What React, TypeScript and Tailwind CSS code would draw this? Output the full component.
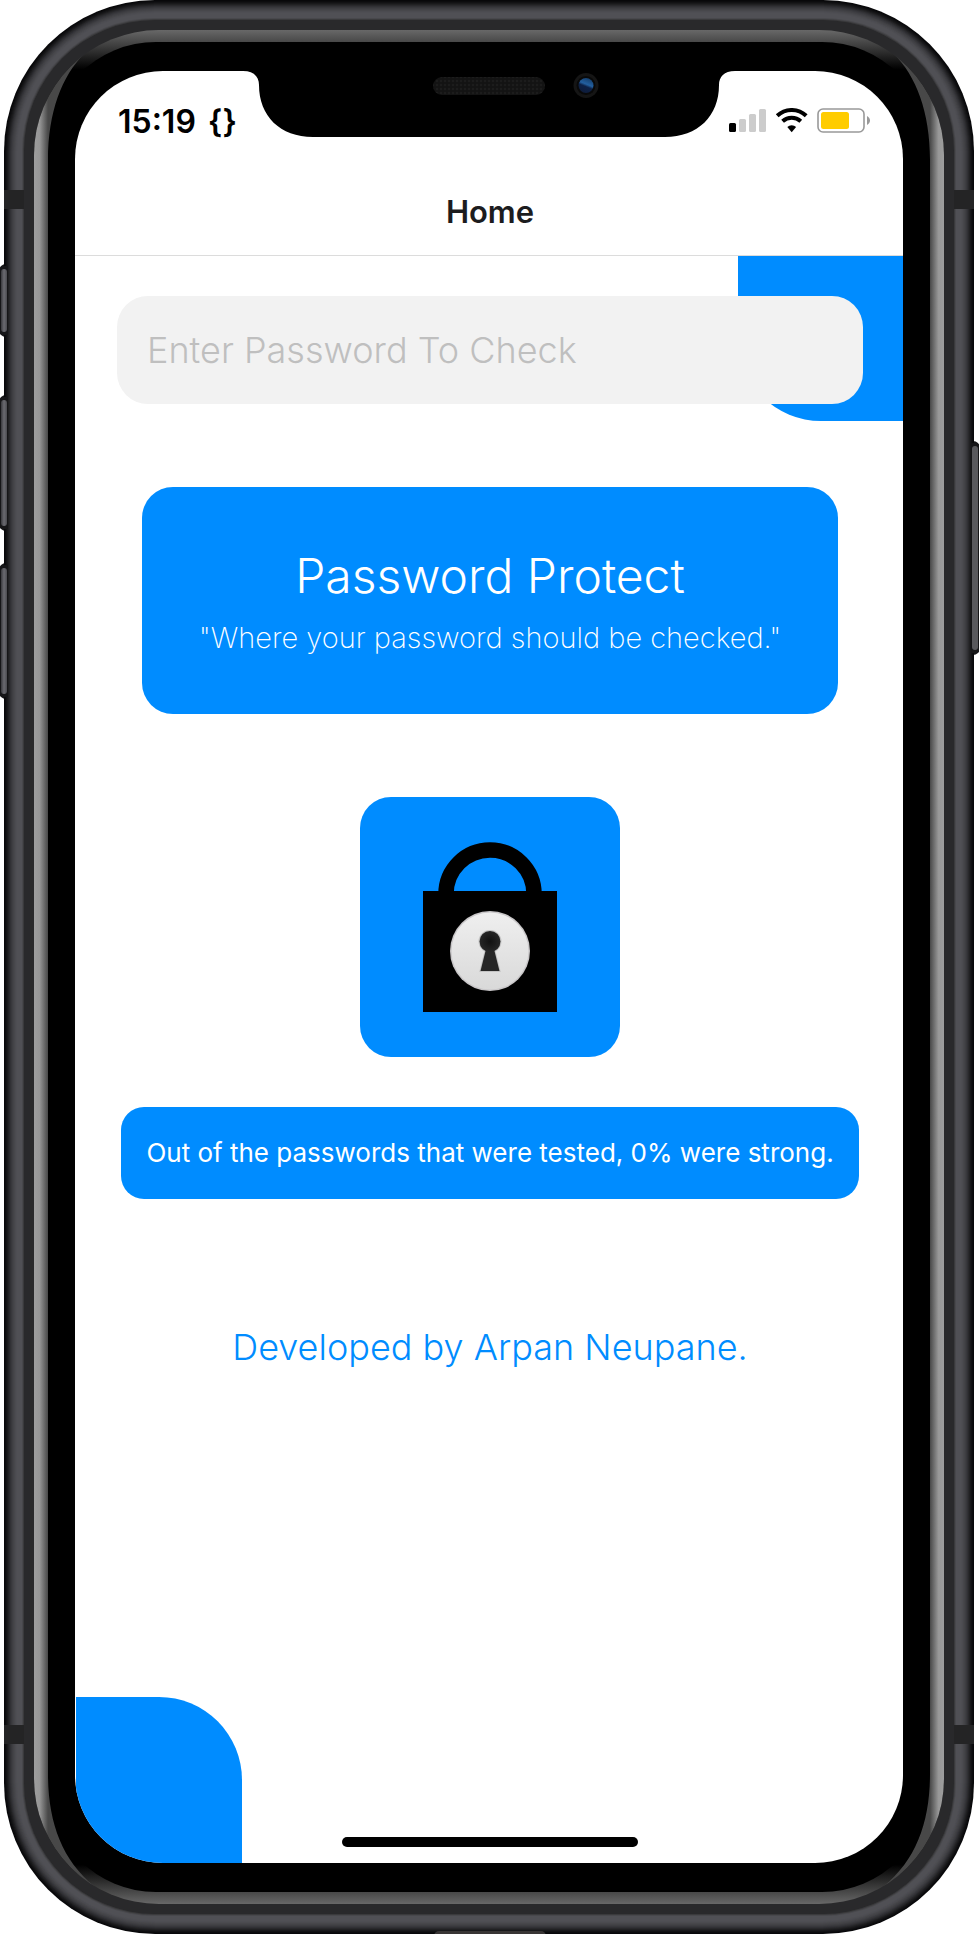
import React from 'react';

/** Concentric outline of the phone body, `inset` pixels in from its edge. */
function Shell({ inset, r, fill }: { inset: number; r: number; fill: string }) {
  return (
    <rect
      x={4 + inset}
      y={inset}
      width={970 - 2 * inset}
      height={1934 - 2 * inset}
      rx={r}
      fill={fill}
    />
  );
}

const metal = [
  '#08080a', '#0c0c0e', '#121214', '#19191b', '#212123', '#29292c', '#313135',
  '#38383c', '#3e3e42', '#434347', '#47474b', '#4b4b50', '#4e4e53', '#505055',
];

const leftKeys = [
  { y: 264, h: 73 },
  { y: 395, h: 136 },
  { y: 563, h: 136 },
];

function PhoneFrame() {
  return (
    <svg
      aria-hidden="true"
      className="absolute inset-0 h-full w-full"
      viewBox="0 0 979 1934"
      preserveAspectRatio="none"
    >
      <defs>
        <linearGradient id="rimY" gradientUnits="userSpaceOnUse" x1="0" y1="30" x2="0" y2="1904">
          <stop offset="0" stopColor="#686868" />
          <stop offset="0.0064" stopColor="#484848" />
          <stop offset="0.021" stopColor="#000" />
          <stop offset="0.979" stopColor="#000" />
          <stop offset="0.9936" stopColor="#484848" />
          <stop offset="1" stopColor="#686868" />
        </linearGradient>
        <linearGradient id="rimLeft" gradientUnits="userSpaceOnUse" x1="34" y1="0" x2="48" y2="0">
          <stop offset="0" stopColor="#9e9e9e" />
          <stop offset="0.4" stopColor="#979797" />
          <stop offset="1" stopColor="#484848" />
        </linearGradient>
        <linearGradient id="keyLeft" x1="0" y1="0" x2="1" y2="0">
          <stop offset="0" stopColor="#3a3a3e" />
          <stop offset="0.5" stopColor="#6a6a70" />
          <stop offset="1" stopColor="#4c4c51" />
        </linearGradient>
        <clipPath id="rimClip">
          <rect x="34" y="30" width="910" height="1874" rx="125" />
        </clipPath>
      </defs>

      {leftKeys.map((k) => (
        <rect key={k.y} x="-1" y={k.y} width="20" height={k.h} rx="7" fill="#161618" />
      ))}
      <rect x="961" y="441" width="19" height="214" rx="7" fill="#161618" />

      {metal.map((color, i) => (
        <Shell key={color} inset={i} r={151 - i} fill={color} />
      ))}
      <Shell inset={18} r={133} fill="#48484c" />
      <Shell inset={19} r={132} fill="#3a3a3c" />
      <Shell inset={20} r={131} fill="#29292b" />
      <rect x="4" y="190" width="20" height="19" fill="#242425" />
      <rect x="954" y="190" width="20" height="19" fill="#242425" />
      <rect x="4" y="1725" width="20" height="19" fill="#242425" />
      <rect x="954" y="1725" width="20" height="19" fill="#242425" />
      <rect x="434" y="1931" width="112" height="10" rx="5" fill="#383535" />

      {leftKeys.map((k) => (
        <g key={k.y}>
          <rect x="4" y={k.y + 2} width="4" height={k.h - 4} fill="#161618" />
          <rect x="1" y={k.y + 5} width="6" height={k.h - 10} rx="3" fill="url(#keyLeft)" />
        </g>
      ))}
      <rect x="971" y="443" width="4" height="210" fill="#161618" />
      <rect x="972" y="446" width="6" height="204" rx="3" fill="#59595d" />

      <g clipPath="url(#rimClip)">
        <rect x="34" y="30" width="910" height="1874" fill="url(#rimY)" />
        <rect x="48" y="42" width="882" height="1850" rx="108" fill="#000" />
        <path
          id="rimSide"
          d="M30,50 L84,54 C62,76 48,112 48,160 V1774 C48,1822 62,1860 94,1886 L30,1900Z"
          fill="url(#rimLeft)"
        />
        <use href="#rimSide" transform="translate(978 0) scale(-1 1)" />
      </g>
    </svg>
  );
}

function Notch() {
  return (
    <svg
      aria-hidden="true"
      className="absolute left-1/2 top-0 h-[66px] w-[492px] -translate-x-1/2"
      viewBox="0 0 492 66"
    >
      <defs>
        <pattern id="mesh" width="4" height="4" patternUnits="userSpaceOnUse">
          <rect width="4" height="4" fill="#131313" />
          <circle cx="2" cy="2" r="1.2" fill="#1c1c1c" />
        </pattern>
        <linearGradient id="lens" x1="0.8" y1="0" x2="0.4" y2="1">
          <stop offset="0" stopColor="#123a66" />
          <stop offset="0.45" stopColor="#2360a0" />
          <stop offset="0.6" stopColor="#0d2147" />
          <stop offset="1" stopColor="#0e1c3a" />
        </linearGradient>
      </defs>
      <path
        d="M0,0 C11,0 16,6 16,14 C16,45 37,66 70,66 H422 C455,66 476,45 476,14 C476,6 481,0 492,0Z"
        fill="#000"
      />
      <rect x="190" y="6" width="112" height="18" rx="9" fill="url(#mesh)" />
      <circle cx="343" cy="14.500" r="12.500" fill="#151515" />
      <circle cx="343" cy="14.500" r="9.500" fill="#090909" />
      <circle cx="343" cy="14.500" r="7.500" fill="url(#lens)" />
    </svg>
  );
}

function StatusIcons() {
  return (
    <svg aria-hidden="true" className="h-7 w-[142px]" viewBox="0 0 142 28">
      <rect x="0" y="15" width="7" height="9" rx="1.500" fill="#000" />
      <rect x="10" y="11" width="7" height="13" rx="1.500" fill="#ccc" />
      <rect x="20" y="6" width="7" height="18" rx="1.500" fill="#ccc" />
      <rect x="30" y="1" width="7" height="23" rx="1.500" fill="#ccc" />
      <path d="M48.200,7.800 A21,21 0 0 1 77.200,7.800" fill="none" stroke="#000" strokeWidth="4" />
      <path d="M53.600,13.200 A13.400,13.400 0 0 1 71.800,13.200" fill="none" stroke="#000" strokeWidth="4" />
      <path d="M58.300,19 A6.500,6.500 0 0 1 67.100,19 L62.700,24.200Z" fill="#000" />
      <rect x="89" y="1" width="46" height="23" rx="5" fill="#fff" stroke="#999" strokeWidth="1.600" />
      <rect x="92" y="4" width="28" height="17" rx="2.500" fill="#fc0" />
      <path d="M138,8 C142,10 142,15 138,17Z" fill="#999" />
    </svg>
  );
}

function LockPicture() {
  return (
    <svg role="img" aria-label="Padlock" className="h-[170px] w-[134px]" viewBox="0 0 134 170">
      <defs>
        <linearGradient id="plate" x1="0" y1="0" x2="0" y2="1">
          <stop offset="0" stopColor="#efefef" />
          <stop offset="1" stopColor="#d9d9d9" />
        </linearGradient>
        <radialGradient id="hole">
          <stop offset="0" stopColor="#111" />
          <stop offset="1" stopColor="#262626" />
        </radialGradient>
      </defs>
      <path d="M23,52 A44,44 0 0 1 111,52" fill="none" stroke="#000" strokeWidth="15.500" />
      <rect x="0" y="49" width="134" height="121" fill="#000" />
      <circle cx="67" cy="109" r="40" fill="#c9c7c9" />
      <circle cx="67" cy="109" r="38.500" fill="url(#plate)" />
      <path
        d="M62.500,109 A10.500,10.500 0 1 1 71.500,109 L76.500,129 H57.500Z"
        fill="none"
        stroke="#c4c4c4"
        strokeWidth="2"
      />
      <path d="M62.500,109 L57.500,129 H76.500 L71.500,109Z" fill="#262626" />
      <circle cx="67" cy="99.500" r="10.500" fill="url(#hole)" />
    </svg>
  );
}

export default function App() {
  return (
    <div className="relative flex min-h-screen flex-col bg-white pb-[71px] pl-[75px] pr-[76px] pt-[71px] font-['Inter',sans-serif]">
      <PhoneFrame />
      <div className="relative flex flex-1 flex-col overflow-hidden rounded-[88px] bg-white">
        <header className="relative flex flex-col border-b border-[#dcdcdc]">
          <div className="flex h-[102px] items-center justify-between pl-[43px] pr-8">
            <div className="flex gap-3 text-[32px] font-semibold leading-10 text-black">
              <span>15:19</span>
              <span>{'{}'}</span>
            </div>
            <StatusIcons />
          </div>
          <Notch />
          <h1 className="flex h-[82px] items-center justify-center pb-1 pl-[2px] text-[31px] font-semibold leading-10 text-[#1c1c1e]">
            Home
          </h1>
        </header>

        <main className="relative flex flex-1 flex-col items-center pl-[42px] pr-10 pt-10">
          <div className="absolute right-0 top-0 h-[165px] w-[165px] rounded-bl-[83px] bg-[#008cff]" />
          <div className="absolute bottom-0 left-px h-[166px] w-[166px] rounded-tr-[83px] bg-[#008cff]" />

          <input
            type="text"
            aria-label="Enter Password To Check"
            placeholder="Enter Password To Check"
            className="relative h-[108px] w-full rounded-[31px] bg-[#f2f2f2] px-[30px] text-[36px] font-light text-[#1c1c1e] outline-none placeholder:text-[#bfbfbf]"
          />

          <section className="mt-[83px] flex w-[696px] max-w-full flex-col items-center rounded-[31px] bg-[#008cff] pb-[53px] pt-[60px] text-center text-white">
            <h2 className="text-[48px] font-light leading-[58px]">Password Protect</h2>
            <p className="mt-[10px] text-[29px] font-extralight leading-[46px]">
              "Where your password should be checked."
            </p>
          </section>

          <div className="mt-[83px] flex h-[260px] w-[260px] items-center justify-center rounded-[31px] bg-[#008cff]">
            <LockPicture />
          </div>

          <p className="mt-[50px] flex min-h-[92px] w-[738px] max-w-full items-center justify-center rounded-[23px] bg-[#008cff] pb-[2px] text-center text-[26px] text-white">
            Out of the passwords that were tested, 0% were strong.
          </p>

          <p className="mt-[124px] text-center text-[36px] font-light leading-[48px] text-[#008cff]">
            Developed by Arpan Neupane.
          </p>
        </main>

        <div className="absolute inset-x-0 bottom-4 flex justify-center pl-[2px]">
          <div className="h-[10px] w-[296px] rounded-full bg-black" />
        </div>
      </div>
    </div>
  );
}
